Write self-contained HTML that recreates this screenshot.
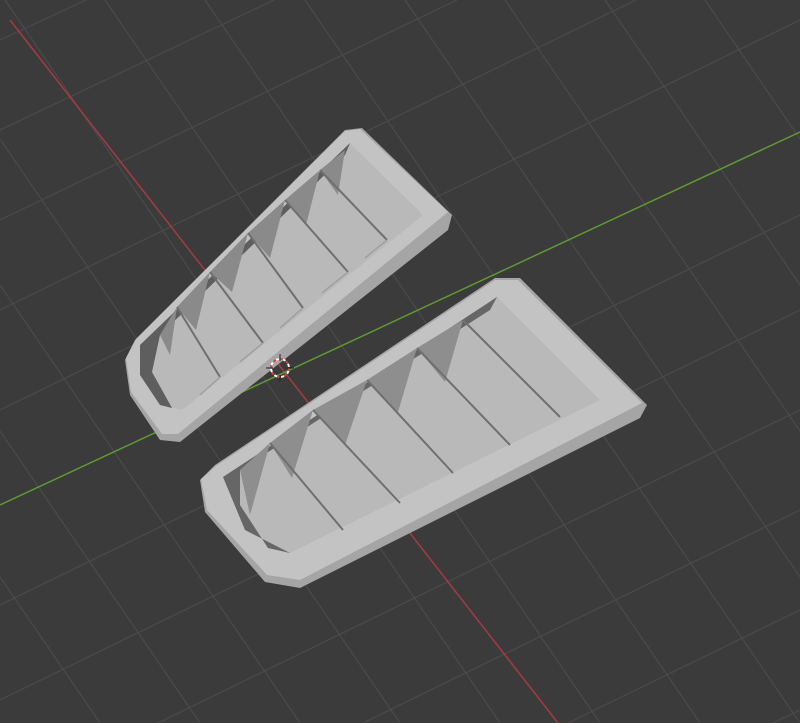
<!DOCTYPE html>
<html><head><meta charset="utf-8"><style>
html,body{margin:0;padding:0;background:#3b3b3b;overflow:hidden;width:800px;height:723px;}
svg{position:absolute;left:0;top:0;display:block}
</style></head><body>
<svg width="800" height="723" viewBox="0 0 800 723" xmlns="http://www.w3.org/2000/svg">
<rect width="800" height="723" fill="#3b3b3b"/>
<g stroke="#4a4a4a" stroke-width="1.2">
<line x1="0" y1="577" x2="100" y2="723"/>
<line x1="0" y1="431" x2="200" y2="723"/>
<line x1="0" y1="285" x2="300" y2="723"/>
<line x1="0" y1="139" x2="400" y2="723"/>
<line x1="5" y1="0" x2="500" y2="723"/>
<line x1="105" y1="0" x2="600" y2="723"/>
<line x1="205" y1="0" x2="700" y2="723"/>
<line x1="305" y1="0" x2="800" y2="723"/>
<line x1="405" y1="0" x2="800" y2="577"/>
<line x1="505" y1="0" x2="800" y2="431"/>
<line x1="605" y1="0" x2="800" y2="285"/>
<line x1="705" y1="0" x2="800" y2="139"/>
<line x1="0" y1="40" x2="86" y2="0"/>
<line x1="0" y1="130" x2="274" y2="0"/>
<line x1="0" y1="220" x2="457" y2="0"/>
<line x1="0" y1="310" x2="636" y2="0"/>
<line x1="0" y1="410" x2="800" y2="20"/>
<line x1="0" y1="605" x2="800" y2="215"/>
<line x1="0" y1="700" x2="800" y2="310"/>
<line x1="158" y1="723" x2="800" y2="410"/>
<line x1="363" y1="723" x2="800" y2="510"/>
<line x1="568" y1="723" x2="800" y2="610"/>
<line x1="773" y1="723" x2="800" y2="710"/>
</g>
<line x1="10" y1="20" x2="558" y2="723" stroke="#a63a44" stroke-width="1.5"/>
<line x1="0" y1="505" x2="800" y2="132" stroke="#5e9a32" stroke-width="1.5"/>

<!-- upper vent -->
<polygon points="125,360 135,340 345,130 362,128 452,215 448,230 180,442 160,440 130,395" fill="#a5a5a5"/>
<polygon points="126,358 136,339 345,131 360,129 448,212 178,434 162,434 131,392" fill="#c3c3c3"/>
<polygon points="140,345 350,143 423,215 182,410 160,405 140,375" fill="#b9b9b9"/>
<polygon points="140,345 350,143 345,155 160,335 152,372 172,408 160,405 140,375" fill="#5e5e5e"/>
<g fill="#8a8a8a">
<polygon points="160,335 177,307 170,355"/>
<polygon points="177,307 210,272 196,330"/>
<polygon points="210,272 248,233 232,292"/>
<polygon points="248,233 285,200 270,258"/>
<polygon points="285,200 320,170 306,225"/>
<polygon points="320,170 345,150 338,195"/>
</g>
<g stroke="#6f6f6f" stroke-width="2">
<line x1="177" y1="307" x2="220" y2="377"/>
<line x1="210" y1="272" x2="263" y2="343"/>
<line x1="248" y1="233" x2="303" y2="308"/>
<line x1="285" y1="200" x2="348" y2="272"/>
<line x1="320" y1="170" x2="387" y2="240"/>
</g>
<g stroke="#a0a0a0" stroke-width="1.5">
<line x1="220" y1="377" x2="200" y2="395"/>
<line x1="263" y1="343" x2="240" y2="362"/>
<line x1="303" y1="308" x2="280" y2="328"/>
<line x1="348" y1="272" x2="322" y2="293"/>
<line x1="387" y1="240" x2="365" y2="258"/>
</g>

<!-- lower vent -->
<polygon points="200,480 215,465 495,278 520,278 647,405 640,418 300,588 265,582 205,512" fill="#a5a5a5"/>
<polygon points="201,479 216,466 495,280 518,280 642,403 300,580 267,575 207,510" fill="#c3c3c3"/>
<polygon points="223,477 497,297 600,400 290,553 245,530" fill="#b9b9b9"/>
<polygon points="223,477 497,297 490,310 240,470 240,505 268,548 290,553 245,530" fill="#666666"/>
<g fill="#8e8e8e">
<polygon points="240,470 270,443 250,515"/>
<polygon points="270,443 313,410 292,478"/>
<polygon points="313,410 367,380 345,445"/>
<polygon points="367,380 417,348 398,412"/>
<polygon points="417,348 463,320 445,382"/>
</g>
<g stroke="#6f6f6f" stroke-width="2">
<line x1="270" y1="443" x2="343" y2="530"/>
<line x1="313" y1="410" x2="400" y2="503"/>
<line x1="367" y1="380" x2="453" y2="473"/>
<line x1="417" y1="348" x2="510" y2="445"/>
<line x1="463" y1="320" x2="560" y2="417"/>
</g>

<!-- 3D cursor -->
<circle cx="280" cy="368" r="9" fill="none" stroke="#e04040" stroke-width="2" stroke-dasharray="4 3"/>
<circle cx="280" cy="368" r="9" fill="none" stroke="#ffffff" stroke-width="2" stroke-dasharray="3 4" stroke-dashoffset="4"/>
<line x1="280" y1="354" x2="280" y2="361" stroke="#222" stroke-width="1"/>
<line x1="280" y1="375" x2="280" y2="382" stroke="#222" stroke-width="1"/>
<line x1="266" y1="368" x2="273" y2="368" stroke="#222" stroke-width="1"/>
<line x1="287" y1="368" x2="294" y2="368" stroke="#222" stroke-width="1"/>
</svg>
</body></html>
